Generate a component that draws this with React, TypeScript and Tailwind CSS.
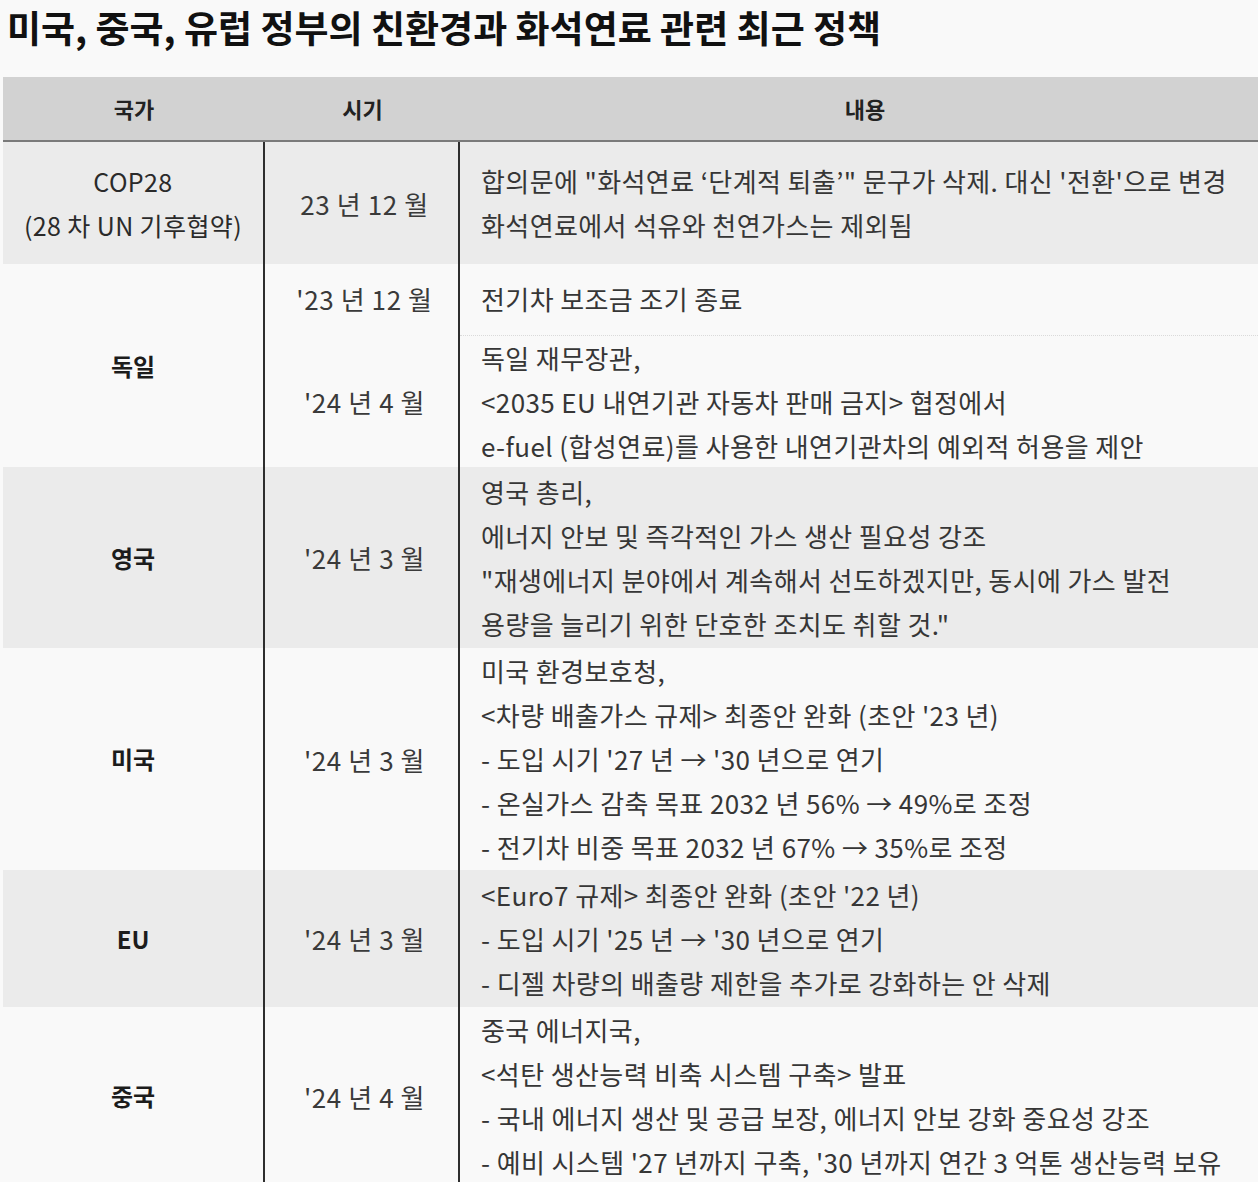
import React from 'react';

interface Block {
  date: string;
  lines: string[];
  height: number; // px height of the sub-row
  pad?: string;
}

interface Row {
  country: string[];
  bold: boolean;
  shaded: boolean;
  height: number;
  blocks: Block[];
}

const ROWS: Row[] = [
  {
    country: ['COP28', '(28 차 UN 기후협약)'],
    bold: false,
    shaded: true,
    height: 122,
    blocks: [
      {
        date: '23 년 12 월',
        lines: [
          '합의문에 "화석연료 ‘단계적 퇴출’" 문구가 삭제. 대신 \'전환\'으로 변경',
          '화석연료에서 석유와 천연가스는 제외됨',
        ],
        height: 122,
      },
    ],
  },
  {
    country: ['독일'],
    bold: true,
    shaded: false,
    height: 203,
    blocks: [
      { date: '\'23 년 12 월', lines: ['전기차 보조금 조기 종료'], height: 71, pad: 'pb-[2px]' },
      {
        date: '\'24 년 4 월',
        lines: [
          '독일 재무장관,',
          '<2035 EU 내연기관 자동차 판매 금지> 협정에서',
          'e-fuel (합성연료)를 사용한 내연기관차의 예외적 허용을 제안',
        ],
        height: 132,
      },
    ],
  },
  {
    country: ['영국'],
    bold: true,
    shaded: true,
    height: 181,
    blocks: [
      {
        date: '\'24 년 3 월',
        lines: [
          '영국 총리,',
          '에너지 안보 및 즉각적인 가스 생산 필요성 강조',
          '"재생에너지 분야에서 계속해서 선도하겠지만, 동시에 가스 발전',
          '용량을 늘리기 위한 단호한 조치도 취할 것."',
        ],
        height: 181,
      },
    ],
  },
  {
    country: ['미국'],
    bold: true,
    shaded: false,
    height: 222,
    blocks: [
      {
        date: '\'24 년 3 월',
        lines: [
          '미국 환경보호청,',
          '<차량 배출가스 규제> 최종안 완화 (초안 \'23 년)',
          '- 도입 시기 \'27 년 → \'30 년으로 연기',
          '- 온실가스 감축 목표 2032 년 56% → 49%로 조정',
          '- 전기차 비중 목표 2032 년 67% → 35%로 조정',
        ],
        height: 222,
      },
    ],
  },
  {
    country: ['EU'],
    bold: true,
    shaded: true,
    height: 137,
    blocks: [
      {
        date: '\'24 년 3 월',
        lines: [
          '<Euro7 규제> 최종안 완화 (초안 \'22 년)',
          '- 도입 시기 \'25 년 → \'30 년으로 연기',
          '- 디젤 차량의 배출량 제한을 추가로 강화하는 안 삭제',
        ],
        height: 137,
      },
    ],
  },
  {
    country: ['중국'],
    bold: true,
    shaded: false,
    height: 178,
    blocks: [
      {
        date: '\'24 년 4 월',
        lines: [
          '중국 에너지국,',
          '<석탄 생산능력 비축 시스템 구축> 발표',
          '- 국내 에너지 생산 및 공급 보장, 에너지 안보 강화 중요성 강조',
          '- 예비 시스템 \'27 년까지 구축, \'30 년까지 연간 3 억톤 생산능력 보유',
        ],
        height: 178,
      },
    ],
  },
];

function PolicyRow({ row }: { row: Row }) {
  return (
    <div
      className={`grid grid-cols-[262px_195px_1fr] ${row.shaded ? 'bg-[#ebebeb]' : 'bg-[#f9f9f9]'}`}
      style={{ height: row.height }}
    >
      {/* 국가 */}
      <div className="flex flex-col items-center justify-center border-r-2 border-[#2e2e2e]">
        {row.country.map((c) => (
          <div
            key={c}
            className={`leading-[44px] text-center ${
              row.bold
                ? 'text-[24px] font-bold text-[#1c1c1c]'
                : 'text-[25px] tracking-[0.4px] text-[#2a2a2a]'
            }`}
          >
            {c}
          </div>
        ))}
      </div>

      {/* 시기 */}
      <div className="flex flex-col border-r-2 border-[#2e2e2e]">
        {row.blocks.map((b) => (
          <div
            key={b.date}
            className={`flex items-center justify-center pl-[6px] text-[26px] tracking-[0.6px] text-[#3a3a3a] ${b.pad ?? ''}`}
            style={{ height: b.height }}
          >
            {b.date}
          </div>
        ))}
      </div>

      {/* 내용 */}
      <div className="flex flex-col">
        {row.blocks.map((b, i) => (
          <div
            key={b.date}
            className={`flex flex-col justify-center pl-[21px] ${b.pad ?? ''} ${
              i > 0 ? 'border-t border-dotted border-[#dadada]' : ''
            }`}
            style={{ height: b.height }}
          >
            {b.lines.map((l) => (
              <div
                key={l}
                className="whitespace-nowrap text-[26px] leading-[44px] tracking-[0.4px] text-[#363636]"
              >
                {l}
              </div>
            ))}
          </div>
        ))}
      </div>
    </div>
  );
}

export default function App() {
  return (
    <div
      className="h-[1182px] w-[1258px] overflow-hidden bg-[#f9f9f9]"
      style={{ fontFamily: '"Noto Sans CJK KR", "Noto Sans", sans-serif' }}
    >
      {/* Title */}
      <h1 className="pl-[7px] text-[37px] font-bold leading-[54px] text-[#111111]">
        미국, 중국, 유럽 정부의 친환경과 화석연료 관련 최근 정책
      </h1>

      {/* Table */}
      <div className="ml-[3px] mt-[23px]">
        <div className="grid h-[65px] grid-cols-[262px_195px_1fr] border-b-2 border-[#7a7a7a] bg-[#d2d2d2] text-[22px] font-bold text-[#222222]">
          <div className="flex items-center justify-center">국가</div>
          <div className="flex items-center justify-center">시기</div>
          <div className="flex items-center justify-center pl-[12px]">내용</div>
        </div>
        {ROWS.map((r) => (
          <PolicyRow key={r.country[0]} row={r} />
        ))}
      </div>
    </div>
  );
}
